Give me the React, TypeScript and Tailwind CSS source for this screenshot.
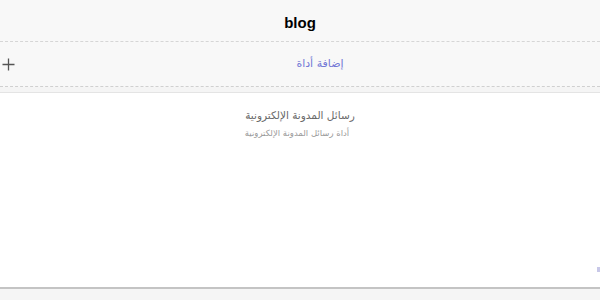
import React from 'react';

const App = () => {
  return (
    <div className="w-[600px] h-[300px] overflow-hidden bg-[#f5f5f5] font-['Liberation_Sans',sans-serif]">
      {/* top bar */}
      <div className="h-[42px] flex items-center justify-center bg-[#f8f8f8] border-b border-dashed border-[#d6d6d6]">
        <h1 className="text-[15px] font-bold text-black pt-[6px]">blog</h1>
      </div>

      {/* add tool row */}
      <div className="h-[45px] flex items-center bg-[#f8f8f8] border-b border-dashed border-[#d0d0d0]">
        <span className="w-[16px] flex justify-center text-[#555]">
          <svg width="13" height="13" viewBox="0 0 13 13">
            <path d="M6.5 0.5v12M0.5 6.5h12" stroke="#555" strokeWidth="1.3" />
          </svg>
        </span>
        <div className="flex-1 flex justify-center pl-[24px]">
          <a dir="rtl" className="text-[11px] text-[#7479d6] font-['DejaVu_Sans',sans-serif] cursor-pointer">
            إضافة أداة
          </a>
        </div>
      </div>

      {/* tool list */}
      <div className="mt-[5px] h-[197px] bg-white border-t border-[#e4e4e4] border-b-2 border-b-[#c4c4c4] relative">
        <div dir="rtl" className="flex flex-col items-center pt-[13px] font-['DejaVu_Sans',sans-serif]">
          <span className="text-[10.5px] text-[#6a6a6a] leading-[18px]">رسائل المدونة الإلكترونية</span>
          <span className="text-[8.5px] text-[#9a9a9a] leading-[18px] mr-[6px]">أداة رسائل المدونة الإلكترونية</span>
        </div>
        <span className="absolute right-0 top-[174px] w-[3px] h-[5px] bg-[#c8c8e8]" />
      </div>
    </div>
  );
};

export default App;
